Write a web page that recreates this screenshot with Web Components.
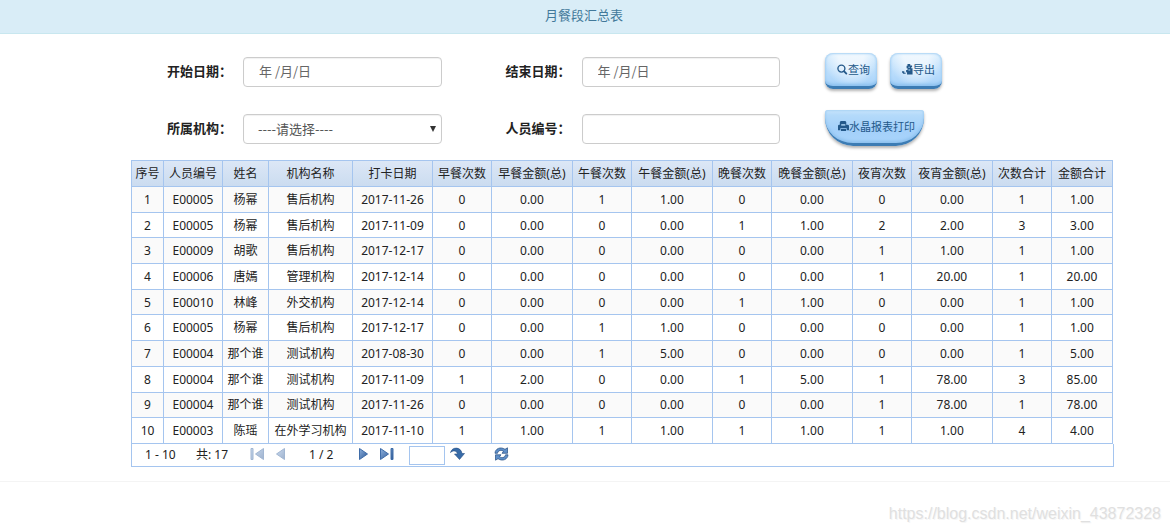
<!DOCTYPE html>
<html lang="zh-CN">
<head>
<meta charset="utf-8">
<title>月餐段汇总表</title>
<style>
body { margin: 0; background: #fff; color: #222; font: 12px/16px "Noto Sans", "Noto Sans CJK SC", sans-serif; }
</style>
</head>
<body>
<meal-report-page></meal-report-page>

<script>
class BaseElement extends HTMLElement {
  constructor() {
    super();
    this.attachShadow({ mode: 'open' });
  }
  connectedCallback() {
    this.shadowRoot.innerHTML = this.render();
  }
}

customElements.define('page-title', class extends BaseElement {
  render() {
    return `<style>
      :host { display: block; background: #d9edf7; border-bottom: 1px solid #c8e7ef; padding: 5px 0 8px; text-align: center; }
      h1 { margin: 0; font-size: 13px; line-height: 20px; font-weight: 400; color: #42799a; padding-right: 2px; }
    </style><h1><slot></slot></h1>`;
  }
});

customElements.define('form-field', class extends BaseElement {
  render() {
    const label = this.getAttribute('label');
    const hint = this.getAttribute('hint') || '';
    const control = this.getAttribute('kind') === 'select'
      ? `<span class="wrap"><select id="c"><option>${hint}</option></select><svg viewBox="0 0 6 6" aria-hidden="true"><path d="M0 0h6L3 6z"/></svg></span>`
      : `<input id="c" type="text" placeholder="${hint}">`;
    return `<style>
      :host { display: flex; align-items: center; min-width: 0; }
      label { flex: 0 0 76px; padding-bottom: 2px; font-size: 13px; line-height: 20px; font-weight: 700; white-space: nowrap; }
      .wrap { position: relative; flex: 1; min-width: 0; display: flex; }
      input, select { flex: 1; width: 100%; min-width: 0; height: 30px; box-sizing: border-box; margin: 0; padding: 0 15px 4px;
        border: 1px solid #ccc; border-radius: 4px; background: #fff; color: #555;
        font: 13px/20px "Noto Sans CJK SC", sans-serif; box-shadow: inset 0 1px 1px rgba(0,0,0,.06); appearance: none; }
      select { padding: 0 14px; }
      ::placeholder { color: #666; opacity: 1; }
      svg { position: absolute; right: 6px; top: 12px; width: 6px; height: 6px; fill: #333; }
    </style><label for="c">${label}</label>${control}`;
  }
});

const BUTTON_ICONS = {
  search: '<path fill="none" stroke="currentColor" stroke-width="1.5" d="M8.6 5a3.8 3.8 0 1 1-7.6 0a3.8 3.8 0 0 1 7.6 0z"/><path stroke="currentColor" stroke-width="2" stroke-linecap="round" d="M7.8 8l2.4 2.5"/>',
  export: '<path fill="currentColor" d="M6 0h3v1.500h2v2h-1v1h1.500v7H5.500V9H4.500V6.500H6V4.500H5V2h1zM0 8h2.500v1.500H4v1H1V9.500H0z"/><path fill="#b4daf8" d="M7 3h1.500v1H7zM7 6h2v1H7z"/>',
  print: '<path fill="currentColor" d="M3 0h5l1 1v3h2l1 1v5H9.500V8h-7v2H0V5l1-1h1V1zM3.200 8.600h5.600V11H3.200z"/><path fill="#b4daf8" d="M3.500 3.500h4.500v1.500H3.500z"/>'
};

customElements.define('gloss-button', class extends BaseElement {
  render() {
    return `<style>
      :host { display: block; --radius: 8px; }
      :host([shape="bowl"]) { --radius: 3px 3px 28px 28px; }
      button { display: flex; align-items: center; justify-content: center; height: 36px; margin: 0; padding: 0 7px 1px 12px;
        box-sizing: border-box; border: 0; border-bottom: 3px solid #3c7cb4; border-radius: var(--radius);
        background: radial-gradient(ellipse at 50% 0, rgba(255,255,255,.65) 0 35%, rgba(255,255,255,0) 75%), linear-gradient(#d4ebfd, #a8d3fa);
        box-shadow: inset 0 1px 2px #a9d2f4, inset 0 -2px 3px #8cc0ee, 0 2px 3px rgba(0,0,0,.3);
        color: #24598a; font: 11px/16px "Noto Sans CJK SC", sans-serif; white-space: nowrap; }
      :host([shape="bowl"]) button { padding: 0 9px 1px 13px;
        background: linear-gradient(#c9e5fc 0, #b4dafa 15%, #a3d0fa 60%, #a9d4fb); }
      svg { width: 11px; height: 11px; flex: none; }
    </style><button type="button"><svg viewBox="0 0 12 12" aria-hidden="true">${BUTTON_ICONS[this.getAttribute('icon')]}</svg><slot></slot></button>`;
  }
});

customElements.define('report-filter', class extends BaseElement {
  render() {
    return `<style>
      :host { display: block; padding: 18px 0 11px 36px; }
      form { display: grid; grid-template-columns: minmax(0, 1fr) 64px minmax(0, 1fr) 45px 289px; row-gap: 17px; align-items: center; margin: 0; }
      form-field:nth-of-type(even) { grid-column: 3; }
      .actions { grid-column: 5; display: flex; gap: 13px; padding: 1px 0 3px; }
    </style>
    <form>
      <form-field label="开始日期：" hint="年 /月/日"></form-field>
      <form-field label="结束日期：" hint="年 /月/日"></form-field>
      <div class="actions"><gloss-button icon="search">查询</gloss-button><gloss-button icon="export">导出</gloss-button></div>
      <form-field label="所属机构：" kind="select" hint="----请选择----"></form-field>
      <form-field label="人员编号："></form-field>
      <div class="actions"><gloss-button shape="bowl" icon="print">水晶报表打印</gloss-button></div>
    </form>`;
  }
});

const COLUMNS = [
  ['序号', 32], ['人员编号', 59], ['姓名', 46], ['机构名称', 84], ['打卡日期', 80],
  ['早餐次数', 59], ['早餐金额(总)', 81], ['午餐次数', 59], ['午餐金额(总)', 81],
  ['晚餐次数', 59], ['晚餐金额(总)', 81], ['夜宵次数', 59], ['夜宵金额(总)', 81],
  ['次数合计', 59], ['金额合计', 61]
];
const ROWS = [
  '1,E00005,杨幂,售后机构,2017-11-26,0,0.00,1,1.00,0,0.00,0,0.00,1,1.00',
  '2,E00005,杨幂,售后机构,2017-11-09,0,0.00,0,0.00,1,1.00,2,2.00,3,3.00',
  '3,E00009,胡歌,售后机构,2017-12-17,0,0.00,0,0.00,0,0.00,1,1.00,1,1.00',
  '4,E00006,唐嫣,管理机构,2017-12-14,0,0.00,0,0.00,0,0.00,1,20.00,1,20.00',
  '5,E00010,林峰,外交机构,2017-12-14,0,0.00,0,0.00,1,1.00,0,0.00,1,1.00',
  '6,E00005,杨幂,售后机构,2017-12-17,0,0.00,1,1.00,0,0.00,0,0.00,1,1.00',
  '7,E00004,那个谁,测试机构,2017-08-30,0,0.00,1,5.00,0,0.00,0,0.00,1,5.00',
  '8,E00004,那个谁,测试机构,2017-11-09,1,2.00,0,0.00,1,5.00,1,78.00,3,85.00',
  '9,E00004,那个谁,测试机构,2017-11-26,0,0.00,0,0.00,0,0.00,1,78.00,1,78.00',
  '10,E00003,陈瑶,在外学习机构,2017-11-10,1,1.00,1,1.00,1,1.00,1,1.00,4,4.00'
].map(row => row.split(','));

customElements.define('report-table', class extends BaseElement {
  render() {
    const total = COLUMNS.reduce((sum, c) => sum + c[1], 0);
    const cols = COLUMNS.map(c => `<col style="width:${c[1] / total * 100}%">`).join('');
    const head = COLUMNS.map(c => `<th scope="col">${c[0]}</th>`).join('');
    const body = ROWS.map(r => `<tr>${r.map(v => `<td>${v}</td>`).join('')}</tr>`).join('');
    return `<style>
      :host { display: block; margin-right: 1px; }
      table { width: 100%; height: 284px; box-sizing: border-box; table-layout: fixed; border-collapse: separate; border-spacing: 0;
        border: solid #a5c5ef; border-width: 1px 0 0 1px; }
      th, td { border: solid #a5c5ef; border-width: 0 1px 1px 0; padding: 1px 0 0; text-align: center; font-weight: 400; white-space: nowrap; }
      thead tr { height: 26px; }
      th { background: linear-gradient(#dce7f6, #cbdcf0); }
      tbody tr:nth-child(odd) { background: #fafafa; }
    </style>
    <table><colgroup>${cols}</colgroup><thead><tr>${head}</tr></thead><tbody>${body}</tbody></table>`;
  }
});

customElements.define('report-pager', class extends BaseElement {
  render() {
    return `<style>
      :host { display: flex; align-items: center; height: 22px; border: 1px solid #a5c5ef; border-top: 0; padding-left: 13px; }
      .range { width: 51px; }
      .total { width: 54px; }
      .page { width: 62px; padding-left: 13px; box-sizing: border-box; white-space: nowrap; }
      button { display: flex; border: 0; padding: 0 0 2px; margin: 0 10px 0 0; background: none; color: #2b5c9c; }
      button:disabled { opacity: .45; }
      svg { width: 15px; height: 14px; }
      .single svg { width: 11px; }
      input { width: 36px; height: 19px; box-sizing: border-box; border: 1px solid #a5c5ef; margin: 0 5px; padding: 0 3px; font: inherit; background: #fff; }
      .go { margin-right: 29px; }
    </style>
    <svg width="0" height="0" style="position:absolute;width:0;height:0" aria-hidden="true"><defs>
      <linearGradient id="g" x1="0" y1="0" x2="1" y2="1"><stop offset="0" stop-color="#8db1de"/><stop offset="1" stop-color="#2a5592"/></linearGradient></defs></svg>
    <span class="range">1 - 10</span><span class="total">共: 17</span>
    <button type="button" disabled aria-label="第一页"><svg viewBox="0 0 15 14"><path fill="url(#g)" stroke="#315f9c" d="M1 1.500h2v11H1zM13.500 1.500v11L5.500 7z"/></svg></button>
    <button type="button" class="single" disabled aria-label="上一页"><svg viewBox="0 0 11 14"><path fill="url(#g)" stroke="#315f9c" d="M9.500 1.500v11L1.500 7z"/></svg></button>
    <span class="page">1 / 2</span>
    <button type="button" class="single" aria-label="下一页"><svg viewBox="0 0 11 14"><path fill="url(#g)" stroke="#3f6ca8" d="M1.500 1.500v11L9.500 7z"/></svg></button>
    <button type="button" aria-label="最后一页"><svg viewBox="0 0 15 14"><path fill="url(#g)" stroke="#3f6ca8" d="M1.500 1.500v11L9.500 7zM12 1.500h2v11h-2z"/></svg></button>
    <input type="text" aria-label="页码">
    <button type="button" class="go" aria-label="跳转"><svg viewBox="0 0 15 14"><path fill="#376ba8" stroke="#264f84" stroke-width=".6" d="M.5 5.500C2 -.5 11-.5 12 6.500h2.500L9.500 12.500 4.500 7H7.500C7 3.500 3 3 .5 5.500z"/></svg></button>
    <button type="button" aria-label="刷新"><svg viewBox="0 0 15 14"><path fill="#5f8fc8" stroke="#244c80" stroke-width=".7" d="M1 6.300C1 1.800 6.500-.8 11 2.300L13.500.8V6.300H8L9.500 4.300C7 2.500 4 3.500 3.500 6.300zM14 7.800C14 12.200 8.500 14.800 4 11.700L1.500 13.200V7.800H7L5.500 9.700C8 11.500 11 10.500 11.500 7.800z"/></svg></button>`;
  }
});

customElements.define('meal-report-page', class extends BaseElement {
  render() {
    return `<style>
      :host { display: block; }
      main { margin: 0 56px 0 131px; }
      footer { margin-top: 14px; border-top: 1px solid #f4f4f4; padding: 22px 9px 8px; text-align: right;
        font: 16px/20px "Liberation Sans", sans-serif; color: #e0e0e0; text-shadow: 1px 1px 0 #f6f6f6; }
    </style>
    <page-title>月餐段汇总表</page-title>
    <main>
      <report-filter></report-filter>
      <report-table></report-table>
      <report-pager></report-pager>
    </main>
    <footer>https://blog.csdn.net/weixin_43872328</footer>`;
  }
});
</script>
</body>
</html>
